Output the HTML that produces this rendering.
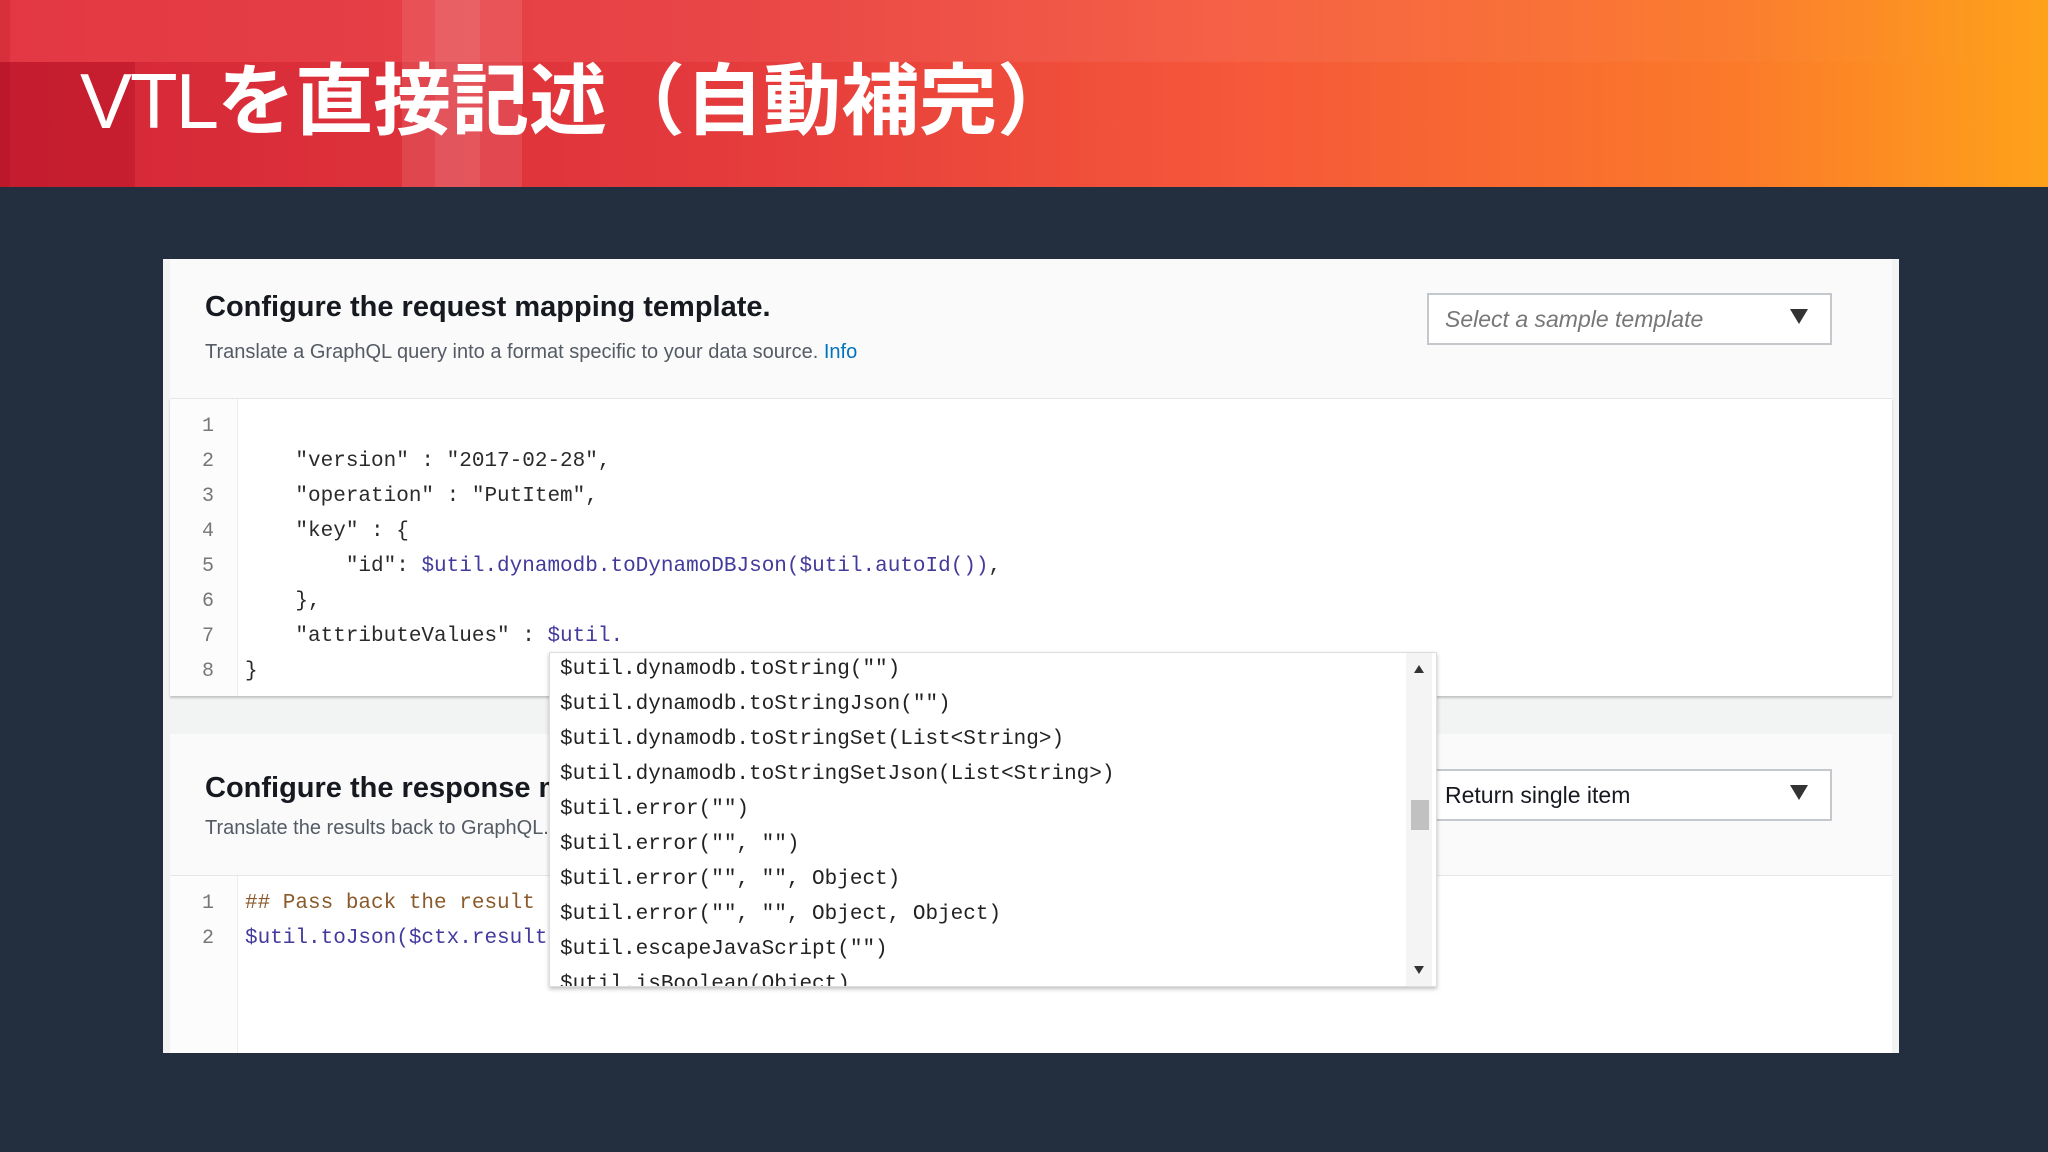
<!DOCTYPE html>
<html><head><meta charset="utf-8"><style>
*{margin:0;padding:0;box-sizing:border-box}
body{width:2048px;height:1152px;background:#232f3e;position:relative;overflow:hidden;font-family:"Liberation Sans","Noto Sans CJK JP",sans-serif}
.hdr{position:absolute;left:0;top:0;width:2048px;height:187px;background:linear-gradient(90deg,#d42638 0%,#e43a3c 35%,#f5573a 60%,#fb7a2a 85%,#fea21a 100%)}
.hdr .top{position:absolute;left:0;top:0;width:100%;height:62px;background:linear-gradient(90deg,rgba(255,90,90,.35),rgba(255,255,255,.06) 60%,rgba(255,255,255,0))}
.hdr .lc{position:absolute;left:0;top:62px;width:135px;height:125px;background:rgba(150,0,20,.25)}
.hdr .lc2{position:absolute;left:0;top:0;width:10px;height:187px;background:rgba(150,0,20,.15)}
.hdr .s1{position:absolute;left:402px;top:0;width:120px;height:187px;background:rgba(255,255,255,.10)}
.hdr .s2{position:absolute;left:435px;top:0;width:45px;height:187px;background:rgba(255,255,255,.08)}
.hdr h1{position:absolute;left:80px;top:46px;font-size:78px;font-weight:bold;color:#fff;line-height:110px;white-space:nowrap}
.hdr h1 span{font-weight:normal;letter-spacing:-2px}
.card{position:absolute;left:163px;top:259px;width:1736px;height:794px;background:#f2f3f3}
.sec{position:absolute;left:7px;width:1722px;background:#fafafa}
.h2{position:absolute;left:35px;font-size:29px;font-weight:bold;color:#16191f}
.sub{position:absolute;left:35px;font-size:20px;color:#545b64}
.sub a{color:#0073bb}
.sel{position:absolute;left:1257px;width:405px;height:52px;border:2px solid #c4c7cc;background:#fff;font-size:23px;line-height:48px;padding-left:16px;color:#16191f}
.sel i{position:absolute;right:22px;top:14px;width:0;height:0;border-left:9px solid transparent;border-right:9px solid transparent;border-top:15px solid #333}
.ed{position:absolute;left:7px;width:1722px;background:#fff;border-top:1px solid #e6e6e6}
.gut{position:absolute;left:0;top:0;bottom:0;width:68px;border-right:1px solid #ececec;background:#fcfcfc}
.ln{position:absolute;font-family:"Liberation Mono",monospace;font-size:20px;color:#777;left:32px;margin-top:3px}
.cd{position:absolute;font-family:"Liberation Mono",monospace;font-size:21px;color:#2a2a2a;white-space:pre;left:75px;margin-top:4px}
.v{color:#433a9c}
.cm{color:#8a5a2b}
.pop{position:absolute;left:549px;top:652px;width:888px;height:335px;background:#fff;border:1px solid #ddd;box-shadow:0 2px 4px rgba(0,0,0,.25);overflow:hidden}
.pop div.it{position:absolute;left:10px;font-family:"Liberation Mono",monospace;font-size:21px;color:#222;white-space:pre;margin-top:3px}
.sb{position:absolute;right:4px;top:0;width:26px;height:100%;background:#f4f4f4}
.sb .t{position:absolute;left:5px;top:147px;width:18px;height:30px;background:#c1c1c1}
.sb .u{position:absolute;left:8px;top:12px;border-left:5px solid transparent;border-right:5px solid transparent;border-bottom:8px solid #333}
.sb .d{position:absolute;left:8px;bottom:12px;border-left:5px solid transparent;border-right:5px solid transparent;border-top:8px solid #333}
</style></head><body>
<div class="hdr"><div class="top"></div><div class="lc"></div><div class="lc2"></div><div class="s1"></div><div class="s2"></div>
<h1><span>VTL</span>を直接記述（自動補完）</h1></div>
<div class="card">
 <div class="sec" style="top:0;height:139px">
  <div class="h2" style="top:32px">Configure the request mapping template.</div>
  <div class="sub" style="top:82px">Translate a GraphQL query into a format specific to your data source. <a>Info</a></div>
  <div class="sel" style="top:34px;color:#777;font-style:italic">Select a sample template<i></i></div>
 </div>
 <div class="ed" style="top:139px;height:298px;box-shadow:0 2px 2px rgba(0,0,0,.2)">
  <div class="gut"></div>
  <div class="ln" style="top:13px">1</div><div class="ln" style="top:48px">2</div><div class="ln" style="top:83px">3</div><div class="ln" style="top:118px">4</div><div class="ln" style="top:153px">5</div><div class="ln" style="top:188px">6</div><div class="ln" style="top:223px">7</div><div class="ln" style="top:258px">8</div>
  <div class="cd" style="top:47px">    "version" : "2017-02-28",</div>
  <div class="cd" style="top:82px">    "operation" : "PutItem",</div>
  <div class="cd" style="top:117px">    "key" : {</div>
  <div class="cd" style="top:152px">        "id": <span class="v">$util.dynamodb.toDynamoDBJson($util.autoId())</span>,</div>
  <div class="cd" style="top:187px">    },</div>
  <div class="cd" style="top:222px">    "attributeValues" : <span class="v">$util.</span></div>
  <div class="cd" style="top:257px">}</div>
 </div>
 <div class="sec" style="top:475px;height:141px">
  <div class="h2" style="top:38px">Configure the response mapping template.</div>
  <div class="sub" style="top:83px">Translate the results back to GraphQL.</div>
  <div class="sel" style="top:35px">Return single item<i></i></div>
 </div>
 <div class="ed" style="top:616px;height:178px">
  <div class="gut"></div>
  <div class="ln" style="top:13px">1</div><div class="ln" style="top:48px">2</div>
  <div class="cd cm" style="top:12px">## Pass back the result</div>
  <div class="cd" style="top:47px"><span class="v">$util.toJson($ctx.result)</span></div>
 </div>
</div>
<div class="pop">
 <div class="it" style="top:2px">$util.dynamodb.toString("")</div>
 <div class="it" style="top:37px">$util.dynamodb.toStringJson("")</div>
 <div class="it" style="top:72px">$util.dynamodb.toStringSet(List&lt;String&gt;)</div>
 <div class="it" style="top:107px">$util.dynamodb.toStringSetJson(List&lt;String&gt;)</div>
 <div class="it" style="top:142px">$util.error("")</div>
 <div class="it" style="top:177px">$util.error("", "")</div>
 <div class="it" style="top:212px">$util.error("", "", Object)</div>
 <div class="it" style="top:247px">$util.error("", "", Object, Object)</div>
 <div class="it" style="top:282px">$util.escapeJavaScript("")</div>
 <div class="it" style="top:317px">$util.isBoolean(Object)</div>
 <div class="sb"><div class="u"></div><div class="t"></div><div class="d"></div></div>
</div>
</body></html>
